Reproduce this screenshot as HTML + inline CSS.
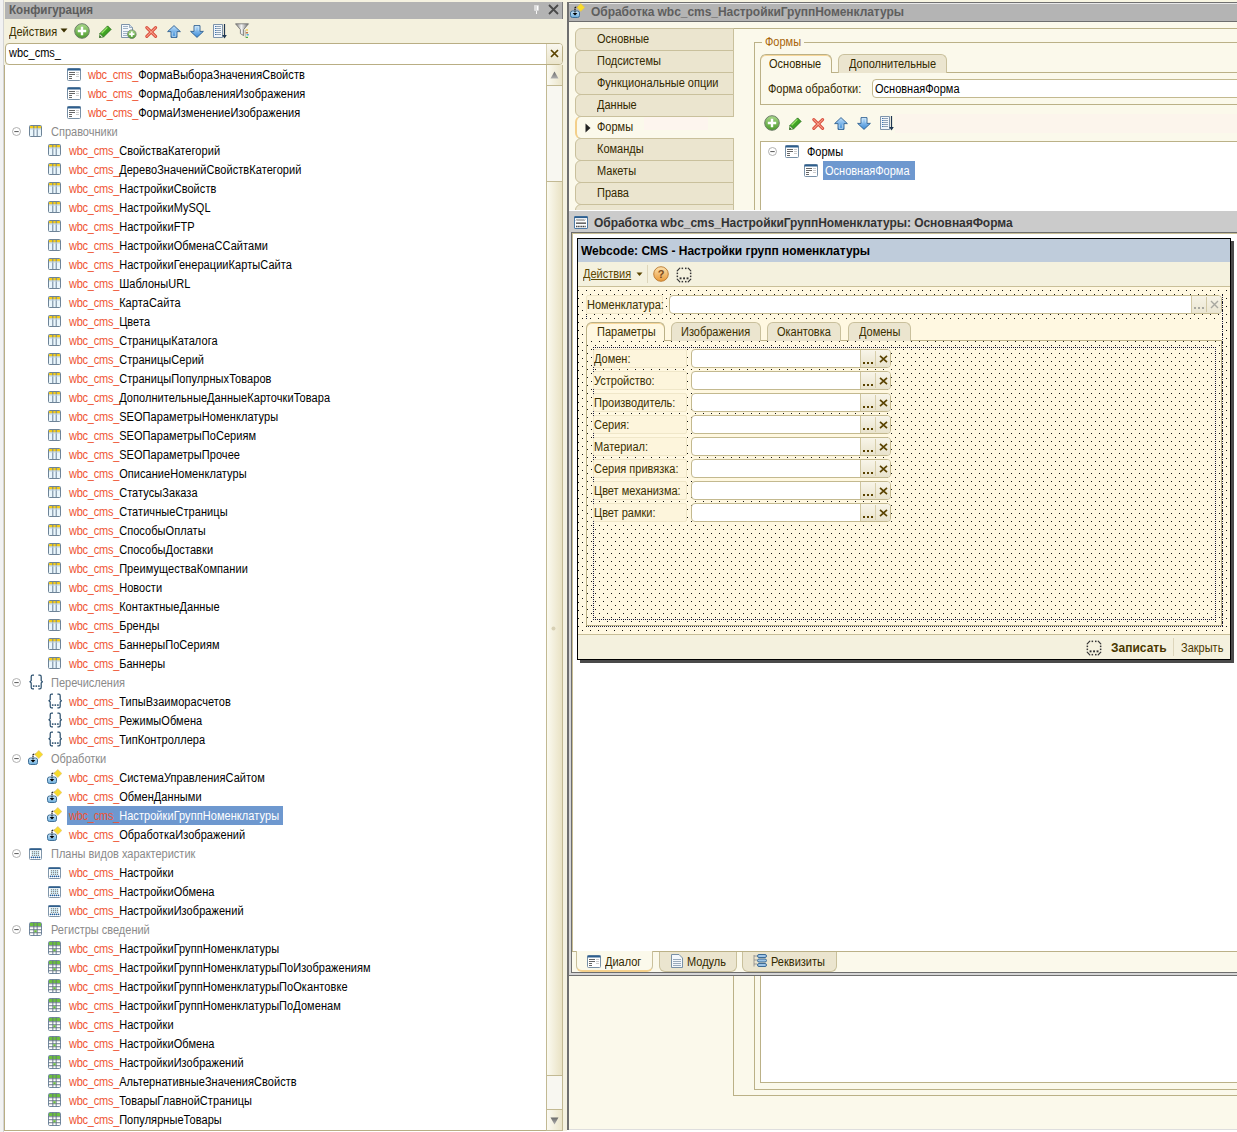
<!DOCTYPE html><html><head><meta charset="utf-8"><style>
html,body{margin:0;padding:0;width:1237px;height:1132px;overflow:hidden;background:#fff;font-family:"Liberation Sans",sans-serif;position:relative}
div{box-sizing:border-box}
svg{display:block;overflow:visible}

</style></head><body>
<svg width="0" height="0" style="position:absolute"><defs>
<linearGradient id="gBlue" x1="0" y1="0" x2="0" y2="1"><stop offset="0" stop-color="#cfe6f7"/><stop offset="1" stop-color="#6aaede"/></linearGradient>
<linearGradient id="gGreen" x1="0" y1="0" x2="0" y2="1"><stop offset="0" stop-color="#a9d98a"/><stop offset="1" stop-color="#4c9a2c"/></linearGradient>
<linearGradient id="gArrow" x1="0" y1="0" x2="0" y2="1"><stop offset="0" stop-color="#bfe0fb"/><stop offset="1" stop-color="#3a8ad6"/></linearGradient>
<linearGradient id="gOrange" x1="0" y1="0" x2="0" y2="1"><stop offset="0" stop-color="#fde3b0"/><stop offset="1" stop-color="#e99a3a"/></linearGradient>
<linearGradient id="gTri" x1="0" y1="0" x2="0" y2="1"><stop offset="0" stop-color="#6a6a6a"/><stop offset="1" stop-color="#b0b0b0"/></linearGradient>
<symbol id="form" viewBox="0 0 14 13">
 <rect x="0.5" y="0.5" width="13" height="12" rx="1" fill="#fff" stroke="#7890a6"/>
 <rect x="0.5" y="0.5" width="13" height="2" fill="#2d5e8e"/>
 <rect x="2" y="4" width="6" height="1" fill="#666"/><rect x="2" y="6" width="6" height="1" fill="#666"/>
 <rect x="2" y="8" width="3" height="1" fill="#666"/><rect x="2" y="10" width="3" height="1" fill="#666"/>
 <rect x="9" y="4" width="3" height="1" fill="#ccc"/><rect x="9" y="6" width="3" height="1" fill="#ccc"/><rect x="9" y="8" width="3" height="1" fill="#ccc"/>
</symbol>
<symbol id="cat" viewBox="0 0 13 12">
 <rect x="0.5" y="0.5" width="12" height="11" rx="1" fill="#eaf6fc" stroke="#6d8397"/>
 <rect x="1" y="1" width="11" height="2.5" fill="#f4cc1a"/>
 <rect x="4.3" y="0.5" width="1" height="11" fill="#6d8397"/><rect x="7.7" y="0.5" width="1" height="11" fill="#6d8397"/>
 <rect x="1" y="3.5" width="11" height="1" fill="#b9cde0"/>
</symbol>
<symbol id="enum" viewBox="0 0 14 16">
 <path d="M5 1.2H3.6Q2.2 1.2 2.2 2.8V6.6L1 7.8L2.2 9V13.2Q2.2 14.8 3.6 14.8H5M9.4 1.2H10.8Q12.2 1.2 12.2 2.8V6.6L13.4 7.8L12.2 9V13.2Q12.2 14.8 10.8 14.8H9.4" fill="none" stroke="#2e5270" stroke-width="1.25"/>
 <g fill="#2e5270"><rect x="3.9" y="11.3" width="1.6" height="1.6"/><rect x="6.5" y="11.3" width="1.6" height="1.6"/><rect x="9.1" y="11.3" width="1.6" height="1.6"/></g>
</symbol>
<symbol id="proc" viewBox="0 0 15 15">
 <rect x="0.5" y="8" width="9" height="6.5" rx="2" fill="url(#gBlue)" stroke="#3f6f96"/>
 <path d="M5 4.3V10" stroke="#000" stroke-width="1.1" stroke-dasharray="1.1 0.6"/>
 <path d="M5 4.3H8" stroke="#000" stroke-width="1.1" stroke-dasharray="1.1 0.6"/>
 <path d="M2.6 10H7.4L5 12.6Z" fill="#000"/>
 <path d="M10.8 0.5L14.8 4.5L10.8 8.5L6.8 4.5Z" fill="#f7dc2c" stroke="#dcb86a" stroke-width="0.6"/>
</symbol>
<symbol id="chart" viewBox="0 0 13 12">
 <rect x="0.5" y="0.5" width="12" height="11" rx="1" fill="#fff" stroke="#8096aa"/>
 <rect x="0.5" y="0.5" width="12" height="1.6" fill="#2d5e8e"/>
 <rect x="2.4" y="2.8" width="8.2" height="5.4" fill="#d6f2fb"/>
 <g fill="#8a8a8a"><circle cx="3.5" cy="3.7" r="0.65"/><circle cx="3.5" cy="5.5" r="0.65"/><circle cx="3.5" cy="7.4" r="0.65"/><circle cx="5.5" cy="3.7" r="0.65"/><circle cx="5.5" cy="5.5" r="0.65"/><circle cx="5.5" cy="7.4" r="0.65"/><circle cx="7.5" cy="3.7" r="0.65"/><circle cx="7.5" cy="5.5" r="0.65"/><circle cx="7.5" cy="7.4" r="0.65"/><circle cx="9.5" cy="3.7" r="0.65"/><circle cx="9.5" cy="5.5" r="0.65"/><circle cx="9.5" cy="7.4" r="0.65"/></g>
 <g fill="#1f5c99"><circle cx="2.5" cy="9.4" r="0.8"/><circle cx="4.5" cy="9.4" r="0.8"/><circle cx="6.5" cy="9.4" r="0.8"/><circle cx="8.5" cy="9.4" r="0.8"/><circle cx="10.5" cy="9.4" r="0.8"/></g>
</symbol>
<symbol id="reg" viewBox="0 0 13 14">
 <rect x="0.5" y="0.5" width="12" height="13" rx="1.2" fill="#fff" stroke="#7389a0"/>
 <rect x="1" y="1" width="11" height="3" fill="#6cbf3e"/>
 <g fill="#5f7080"><rect x="4.4" y="0.5" width="0.9" height="13"/><rect x="7.7" y="0.5" width="0.9" height="13"/>
 <rect x="0.5" y="4.3" width="12" height="0.9" fill="#5f7080"/><rect x="0.5" y="7.3" width="12" height="0.9"/><rect x="0.5" y="10.3" width="12" height="0.9"/></g>
 <rect x="5.3" y="8.2" width="2.4" height="2.1" fill="#6cbf3e"/>
</symbol>
<symbol id="minus" viewBox="0 0 9 9">
 <circle cx="4.5" cy="4.5" r="4" fill="#fff" stroke="#a8a8a8" stroke-width="0.9"/>
 <rect x="2.3" y="4" width="4.4" height="1.1" fill="#666"/>
</symbol>
<symbol id="plus" viewBox="0 0 16 16">
 <circle cx="8" cy="8" r="7.3" fill="url(#gGreen)" stroke="#6b7d68" stroke-width="1"/>
 <path d="M8 3.8V12.2M3.8 8H12.2" stroke="#fff" stroke-width="2.4"/>
</symbol>
<symbol id="pencil" viewBox="0 0 13 13">
 <path d="M0.9 8.6L8.6 0.9L12.1 4.4L4.4 12.1Z" fill="#3fa324" stroke="#1d6a10" stroke-width="0.8" stroke-linejoin="round"/>
 <path d="M2.6 8.2L8.4 2.4" stroke="#9be46a" stroke-width="1.3"/>
 <path d="M0.9 8.6L4.4 12.1L0.3 12.7Z" fill="#f2efdc" stroke="#1d6a10" stroke-width="0.6" stroke-linejoin="round"/>
 <path d="M0.3 12.7L0.9 10.6L2.4 12.1Z" fill="#1d5a10"/>
</symbol>
<symbol id="docplus" viewBox="0 0 16 15">
 <path d="M0.5 0.5H8.5L11.5 3.5V13.5H0.5Z" fill="#f4f8fc" stroke="#7d93aa"/>
 <path d="M8.5 0.5V3.5H11.5" fill="#cfdbe8" stroke="#7d93aa" stroke-width="0.7"/>
 <g fill="#9fb2c6" shape-rendering="crispEdges"><rect x="2" y="2" width="5" height="1"/><rect x="2" y="4" width="5" height="1"/><rect x="2" y="7" width="5" height="1"/><rect x="2" y="9" width="4" height="1"/><rect x="2" y="11" width="4" height="1"/></g>
 <circle cx="10.8" cy="10.2" r="4.3" fill="url(#gGreen)" stroke="#6b7d68" stroke-width="0.8"/>
 <path d="M10.8 7.6V12.8M8.2 10.2H13.4" stroke="#fff" stroke-width="1.8"/>
</symbol>
<symbol id="redx" viewBox="0 0 13 12">
 <path d="M1.8 1.6L10.6 10.4M10.6 1.6L1.8 10.4" stroke="#d94a3a" stroke-width="3" stroke-linecap="round"/>
 <path d="M1.8 1.6L10.6 10.4M10.6 1.6L1.8 10.4" stroke="#f7a08a" stroke-width="1.1" stroke-linecap="round"/>
</symbol>
<symbol id="up" viewBox="0 0 14 13">
 <path d="M7 0.6L13.4 6.6H10V12.4H4V6.6H0.6Z" fill="url(#gArrow)" stroke="#2f5f8e" stroke-width="0.9" stroke-linejoin="round"/>
 <path d="M5.2 7.4V11.4H8.8V7.4" fill="none" stroke="#d6ecfb" stroke-width="0.7"/>
</symbol>
<symbol id="down" viewBox="0 0 14 13">
 <path d="M7 12.4L13.4 6.4H10V0.6H4V6.4H0.6Z" fill="url(#gArrow)" stroke="#2f5f8e" stroke-width="0.9" stroke-linejoin="round"/>
 <path d="M5.2 5.6V1.6H8.8V5.6" fill="none" stroke="#d6ecfb" stroke-width="0.7"/>
</symbol>
<symbol id="list" viewBox="0 0 14 15">
 <path d="M0.5 0.5H9.5V13.5H0.5Z" fill="#f2f6fa" stroke="#7d93aa"/>
 <g fill="#8fa3b8" shape-rendering="crispEdges"><rect x="2" y="2" width="6" height="1"/><rect x="2" y="4" width="6" height="1"/><rect x="2" y="6" width="6" height="1"/><rect x="2" y="8" width="6" height="1"/><rect x="2" y="10" width="6" height="1"/></g>
 <g fill="#3f78b8" shape-rendering="crispEdges"><rect x="2" y="2" width="1" height="1"/><rect x="2" y="4" width="1" height="1"/><rect x="2" y="6" width="1" height="1"/><rect x="2" y="8" width="1" height="1"/><rect x="2" y="10" width="1" height="1"/></g>
 <path d="M11.5 0V12" stroke="#1e3550" stroke-width="1.2"/><path d="M9.2 11H13.8L11.5 14.5Z" fill="#1e3550"/>
</symbol>
<symbol id="filter" viewBox="0 0 16 16">
 <linearGradient id="gMetal" x1="0" y1="0" x2="1" y2="0"><stop offset="0" stop-color="#777"/><stop offset="0.45" stop-color="#f4f4f4"/><stop offset="1" stop-color="#6a6a6a"/></linearGradient>
 <path d="M0.5 0.8H13.5L8.6 6.6V12.6L5.4 10.6V6.6Z" fill="url(#gMetal)" stroke="#6d6d6d" stroke-width="0.8" stroke-linejoin="round"/>
 <path d="M10.3 7V14.5" stroke="#999" stroke-width="0.6"/>
 <rect x="10.8" y="6.4" width="2.2" height="1.2" fill="#f2c23a"/><rect x="10.8" y="9.2" width="2.2" height="1.2" fill="#b5592a"/><rect x="11.6" y="11.2" width="2.2" height="1.2" fill="#2aa0e0"/><rect x="10.8" y="13.8" width="2.2" height="1.2" fill="#4caa3c"/>
</symbol>
<symbol id="help" viewBox="0 0 16 16">
 <circle cx="8" cy="8" r="7.3" fill="url(#gOrange)" stroke="#b9772d" stroke-width="0.9"/>
 <text x="8" y="12.3" text-anchor="middle" font-family="Liberation Sans" font-weight="bold" font-size="11" fill="#7a4a1c">?</text>
</symbol>
<symbol id="dotsq" viewBox="0 0 16 16">
 <g stroke="#333" stroke-width="1.2" stroke-linecap="round"><path d="M1.2 3.8L3.8 1.2M12.2 1.2L14.8 3.8M1.2 12.2L3.8 14.8M12.2 14.8L14.8 12.2"/></g>
 <g fill="#333"><rect x="5.6" y="0.6" width="1.5" height="1.5"/><rect x="9" y="0.6" width="1.5" height="1.5"/><rect x="5.6" y="13.9" width="1.5" height="1.5"/><rect x="9" y="13.9" width="1.5" height="1.5"/>
 <rect x="0.6" y="5.6" width="1.5" height="1.5"/><rect x="0.6" y="8.6" width="1.5" height="1.5"/><rect x="13.9" y="5.6" width="1.5" height="1.5"/><rect x="13.9" y="8.6" width="1.5" height="1.5"/>
 <rect x="3.6" y="10.4" width="1.9" height="1.9"/><rect x="7.1" y="10.4" width="1.9" height="1.9"/><rect x="10.6" y="10.4" width="1.9" height="1.9"/></g>
</symbol>
<symbol id="formtitle" viewBox="0 0 14 13">
 <rect x="0.5" y="0.5" width="13" height="12" rx="0.5" fill="#fff" stroke="#4e7aa5"/>
 <rect x="0.5" y="0.5" width="13" height="1.6" fill="#2d5e8e"/>
 <path d="M2 4.5l1-1 1 1 1-1 1 1 1-1 1 1 1-1 1 1 1-1" stroke="#333" stroke-width="0.8" fill="none"/>
 <rect x="2" y="6.5" width="10" height="1.3" fill="#444"/>
 <path d="M2 10.5h10" stroke="#444" stroke-width="1.3" stroke-dasharray="1.2 0.5"/>
</symbol>
<symbol id="module" viewBox="0 0 12 14">
 <path d="M0.5 0.5H8L11.5 4V13.5H0.5Z" fill="#f4f8fc" stroke="#7890a6"/>
 <g fill="#9ab"><rect x="2" y="5" width="8" height="1"/><rect x="2" y="7" width="8" height="1"/><rect x="2" y="9" width="8" height="1"/><rect x="2" y="11" width="8" height="1"/></g>
</symbol>
<symbol id="attrs" viewBox="0 0 14 14">
 <path d="M1 1V12.5M1 2H4M1 6H4M1 10H4" stroke="#888" stroke-width="0.8" fill="none"/>
 <rect x="4.5" y="0.5" width="9" height="3" rx="1.5" fill="#9cc3e6" stroke="#3d6b95"/>
 <rect x="4.5" y="5" width="9" height="3" rx="1.5" fill="#9cc3e6" stroke="#3d6b95"/>
 <rect x="4.5" y="9.5" width="9" height="3" rx="1.5" fill="#9cc3e6" stroke="#3d6b95"/>
</symbol>
</defs></svg>
<div style="position:absolute;left:0px;top:0px;width:3px;height:1132px;background:#f2f2f2"></div>
<div style="position:absolute;left:3px;top:0px;width:1px;height:1132px;background:#d4d4d4"></div>
<div style="position:absolute;left:4px;top:0px;width:563px;height:2px;background:#f5f2e1"></div>
<div style="position:absolute;left:4px;top:2px;width:1px;height:41px;background:#f0ecd8"></div>
<div style="position:absolute;left:5px;top:2px;width:558px;height:17px;background:#b3b3b3;border-right:1px solid #7a7a7a"></div>
<div style="position:absolute;left:9px;top:2.84px;line-height:14px;font-size:12px;font-weight:bold;color:#5c5c5c;white-space:nowrap;transform:scaleX(0.9650);transform-origin:0 0;">Конфигурация</div>
<svg style="position:absolute;left:533px;top:5px" width="7" height="10"><rect x="1.5" y="0.5" width="4" height="5" fill="#fff" stroke="#ddd" stroke-width="0.5"/><rect x="2.5" y="1" width="1" height="4" fill="#bbb"/><rect x="3" y="6" width="1" height="3" fill="#f4f4f4"/></svg>
<svg style="position:absolute;left:548px;top:4px" width="11" height="11"><path d="M1 1L10 10M10 1L1 10" stroke="#4a4a4a" stroke-width="1.8"/></svg>
<div style="position:absolute;left:4px;top:19px;width:559px;height:24px;background:#f4f1de"></div>
<div style="position:absolute;left:9px;top:24.84px;line-height:14px;font-size:12px;font-weight:normal;color:#3b3100;white-space:nowrap;transform:scaleX(0.9167);transform-origin:0 0;">Действия</div>
<svg style="position:absolute;left:60px;top:28px" width="8" height="5"><path d="M0.5 0.5H7.5L4 4.5Z" fill="#3b3100"/></svg>
<svg style="position:absolute;left:74px;top:23px" width="16" height="16" viewBox="0 0 16 16"><use href="#plus"/></svg>
<svg style="position:absolute;left:99px;top:25px" width="13" height="13" viewBox="0 0 13 13"><use href="#pencil"/></svg>
<svg style="position:absolute;left:121px;top:24px" width="16" height="15" viewBox="0 0 16 15"><use href="#docplus"/></svg>
<svg style="position:absolute;left:145px;top:26px" width="13" height="12" viewBox="0 0 13 12"><use href="#redx"/></svg>
<svg style="position:absolute;left:167px;top:25px" width="14" height="13" viewBox="0 0 14 13"><use href="#up"/></svg>
<svg style="position:absolute;left:190px;top:25px" width="14" height="13" viewBox="0 0 14 13"><use href="#down"/></svg>
<svg style="position:absolute;left:213px;top:24px" width="14" height="15" viewBox="0 0 14 15"><use href="#list"/></svg>
<svg style="position:absolute;left:235px;top:23px" width="16" height="16" viewBox="0 0 16 16"><use href="#filter"/></svg>
<div style="position:absolute;left:4px;top:43px;width:559px;height:22px;background:#f4f1de"></div>
<div style="position:absolute;left:5px;top:43px;width:558px;height:22px;background:#fff;border:1px solid #b9ae84;border-radius:4px"></div>
<div style="position:absolute;left:9px;top:45.84px;line-height:14px;font-size:12px;font-weight:normal;color:#000;white-space:nowrap;transform:scaleX(0.9167);transform-origin:0 0;">wbc_cms_</div>
<div style="position:absolute;left:546px;top:44px;width:16px;height:20px;background:linear-gradient(#f9f7ee,#ebe5cc);border-left:1px solid #d9d2b4;border-radius:0 3px 3px 0"></div>
<svg style="position:absolute;left:550px;top:49px" width="9" height="9"><path d="M1 1L8 8M8 1L1 8" stroke="#5a4300" stroke-width="1.7"/></svg>
<div style="position:absolute;left:4px;top:65px;width:559px;height:1066px;background:#fff;border-left:1px solid #b9ae84;border-bottom:1px solid #b9ae84"></div>
<div style="position:absolute;left:546px;top:65px;width:17px;height:1066px;background:#f8f7f1;border-left:1px solid #c2b993;border-right:1px solid #c2b993"></div>
<div style="position:absolute;left:546px;top:65px;width:17px;height:21px;background:linear-gradient(90deg,#fbfaf2,#ebe5ca);border:1px solid #c2b993;border-top:none"></div>
<svg style="position:absolute;left:550px;top:71px" width="9" height="8"><path d="M4.5 0.5L8.5 7.5H0.5Z" fill="url(#gTri)"/></svg>
<div style="position:absolute;left:546px;top:181px;width:17px;height:895px;background:linear-gradient(90deg,#fbfaf0,#e9e2c4);border:1px solid #c2b993"></div>
<svg style="position:absolute;left:551px;top:626px" width="5" height="5"><circle cx="2.5" cy="2.5" r="2" fill="#d7d0b4"/></svg>
<div style="position:absolute;left:546px;top:1109px;width:17px;height:22px;background:linear-gradient(90deg,#fbfaf2,#ebe5ca);border:1px solid #c2b993"></div>
<svg style="position:absolute;left:550px;top:1117px" width="9" height="8"><path d="M0.5 0.5H8.5L4.5 7.5Z" fill="url(#gTri)"/></svg>
<svg style="position:absolute;left:67px;top:68px" width="14" height="13" viewBox="0 0 14 13"><use href="#form"/></svg>
<div style="position:absolute;left:87.7px;top:67.84px;line-height:14px;font-size:12px;font-weight:normal;color:#000;white-space:nowrap;transform:scaleX(0.9167);transform-origin:0 0;"><span style="color:#ef5533;letter-spacing:-0.25px">wbc_cms_</span><span style="letter-spacing:0.07px">ФормаВыбораЗначенияСвойств</span></div>
<svg style="position:absolute;left:67px;top:87px" width="14" height="13" viewBox="0 0 14 13"><use href="#form"/></svg>
<div style="position:absolute;left:87.7px;top:86.84px;line-height:14px;font-size:12px;font-weight:normal;color:#000;white-space:nowrap;transform:scaleX(0.9167);transform-origin:0 0;"><span style="color:#ef5533;letter-spacing:-0.25px">wbc_cms_</span><span style="letter-spacing:0.07px">ФормаДобавленияИзображения</span></div>
<svg style="position:absolute;left:67px;top:106px" width="14" height="13" viewBox="0 0 14 13"><use href="#form"/></svg>
<div style="position:absolute;left:87.7px;top:105.84px;line-height:14px;font-size:12px;font-weight:normal;color:#000;white-space:nowrap;transform:scaleX(0.9167);transform-origin:0 0;"><span style="color:#ef5533;letter-spacing:-0.25px">wbc_cms_</span><span style="letter-spacing:0.07px">ФормаИзменениеИзображения</span></div>
<svg style="position:absolute;left:12px;top:126.5px" width="9" height="9" viewBox="0 0 9 9"><use href="#minus"/></svg>
<svg style="position:absolute;left:29px;top:125px" width="13" height="12" viewBox="0 0 13 12"><use href="#cat"/></svg>
<div style="position:absolute;left:50.9px;top:124.84px;line-height:14px;font-size:12px;font-weight:normal;color:#8a8a8a;white-space:nowrap;transform:scaleX(0.9167);transform-origin:0 0;">Справочники</div>
<svg style="position:absolute;left:48px;top:144px" width="13" height="12" viewBox="0 0 13 12"><use href="#cat"/></svg>
<div style="position:absolute;left:68.8px;top:143.84px;line-height:14px;font-size:12px;font-weight:normal;color:#000;white-space:nowrap;transform:scaleX(0.9167);transform-origin:0 0;"><span style="color:#ef5533;letter-spacing:-0.25px">wbc_cms_</span><span style="letter-spacing:0.07px">СвойстваКатегорий</span></div>
<svg style="position:absolute;left:48px;top:163px" width="13" height="12" viewBox="0 0 13 12"><use href="#cat"/></svg>
<div style="position:absolute;left:68.8px;top:162.84px;line-height:14px;font-size:12px;font-weight:normal;color:#000;white-space:nowrap;transform:scaleX(0.9167);transform-origin:0 0;"><span style="color:#ef5533;letter-spacing:-0.25px">wbc_cms_</span><span style="letter-spacing:0.07px">ДеревоЗначенийСвойствКатегорий</span></div>
<svg style="position:absolute;left:48px;top:182px" width="13" height="12" viewBox="0 0 13 12"><use href="#cat"/></svg>
<div style="position:absolute;left:68.8px;top:181.84px;line-height:14px;font-size:12px;font-weight:normal;color:#000;white-space:nowrap;transform:scaleX(0.9167);transform-origin:0 0;"><span style="color:#ef5533;letter-spacing:-0.25px">wbc_cms_</span><span style="letter-spacing:0.07px">НастройкиСвойств</span></div>
<svg style="position:absolute;left:48px;top:201px" width="13" height="12" viewBox="0 0 13 12"><use href="#cat"/></svg>
<div style="position:absolute;left:68.8px;top:200.84px;line-height:14px;font-size:12px;font-weight:normal;color:#000;white-space:nowrap;transform:scaleX(0.9167);transform-origin:0 0;"><span style="color:#ef5533;letter-spacing:-0.25px">wbc_cms_</span><span style="letter-spacing:0.07px">НастройкиMySQL</span></div>
<svg style="position:absolute;left:48px;top:220px" width="13" height="12" viewBox="0 0 13 12"><use href="#cat"/></svg>
<div style="position:absolute;left:68.8px;top:219.84px;line-height:14px;font-size:12px;font-weight:normal;color:#000;white-space:nowrap;transform:scaleX(0.9167);transform-origin:0 0;"><span style="color:#ef5533;letter-spacing:-0.25px">wbc_cms_</span><span style="letter-spacing:0.07px">НастройкиFTP</span></div>
<svg style="position:absolute;left:48px;top:239px" width="13" height="12" viewBox="0 0 13 12"><use href="#cat"/></svg>
<div style="position:absolute;left:68.8px;top:238.84px;line-height:14px;font-size:12px;font-weight:normal;color:#000;white-space:nowrap;transform:scaleX(0.9167);transform-origin:0 0;"><span style="color:#ef5533;letter-spacing:-0.25px">wbc_cms_</span><span style="letter-spacing:0.07px">НастройкиОбменаССайтами</span></div>
<svg style="position:absolute;left:48px;top:258px" width="13" height="12" viewBox="0 0 13 12"><use href="#cat"/></svg>
<div style="position:absolute;left:68.8px;top:257.84px;line-height:14px;font-size:12px;font-weight:normal;color:#000;white-space:nowrap;transform:scaleX(0.9167);transform-origin:0 0;"><span style="color:#ef5533;letter-spacing:-0.25px">wbc_cms_</span><span style="letter-spacing:0.07px">НастройкиГенерацииКартыСайта</span></div>
<svg style="position:absolute;left:48px;top:277px" width="13" height="12" viewBox="0 0 13 12"><use href="#cat"/></svg>
<div style="position:absolute;left:68.8px;top:276.84px;line-height:14px;font-size:12px;font-weight:normal;color:#000;white-space:nowrap;transform:scaleX(0.9167);transform-origin:0 0;"><span style="color:#ef5533;letter-spacing:-0.25px">wbc_cms_</span><span style="letter-spacing:0.07px">ШаблоныURL</span></div>
<svg style="position:absolute;left:48px;top:296px" width="13" height="12" viewBox="0 0 13 12"><use href="#cat"/></svg>
<div style="position:absolute;left:68.8px;top:295.84px;line-height:14px;font-size:12px;font-weight:normal;color:#000;white-space:nowrap;transform:scaleX(0.9167);transform-origin:0 0;"><span style="color:#ef5533;letter-spacing:-0.25px">wbc_cms_</span><span style="letter-spacing:0.07px">КартаСайта</span></div>
<svg style="position:absolute;left:48px;top:315px" width="13" height="12" viewBox="0 0 13 12"><use href="#cat"/></svg>
<div style="position:absolute;left:68.8px;top:314.84px;line-height:14px;font-size:12px;font-weight:normal;color:#000;white-space:nowrap;transform:scaleX(0.9167);transform-origin:0 0;"><span style="color:#ef5533;letter-spacing:-0.25px">wbc_cms_</span><span style="letter-spacing:0.07px">Цвета</span></div>
<svg style="position:absolute;left:48px;top:334px" width="13" height="12" viewBox="0 0 13 12"><use href="#cat"/></svg>
<div style="position:absolute;left:68.8px;top:333.84px;line-height:14px;font-size:12px;font-weight:normal;color:#000;white-space:nowrap;transform:scaleX(0.9167);transform-origin:0 0;"><span style="color:#ef5533;letter-spacing:-0.25px">wbc_cms_</span><span style="letter-spacing:0.07px">СтраницыКаталога</span></div>
<svg style="position:absolute;left:48px;top:353px" width="13" height="12" viewBox="0 0 13 12"><use href="#cat"/></svg>
<div style="position:absolute;left:68.8px;top:352.84px;line-height:14px;font-size:12px;font-weight:normal;color:#000;white-space:nowrap;transform:scaleX(0.9167);transform-origin:0 0;"><span style="color:#ef5533;letter-spacing:-0.25px">wbc_cms_</span><span style="letter-spacing:0.07px">СтраницыСерий</span></div>
<svg style="position:absolute;left:48px;top:372px" width="13" height="12" viewBox="0 0 13 12"><use href="#cat"/></svg>
<div style="position:absolute;left:68.8px;top:371.84px;line-height:14px;font-size:12px;font-weight:normal;color:#000;white-space:nowrap;transform:scaleX(0.9167);transform-origin:0 0;"><span style="color:#ef5533;letter-spacing:-0.25px">wbc_cms_</span><span style="letter-spacing:0.07px">СтраницыПопулрныхТоваров</span></div>
<svg style="position:absolute;left:48px;top:391px" width="13" height="12" viewBox="0 0 13 12"><use href="#cat"/></svg>
<div style="position:absolute;left:68.8px;top:390.84px;line-height:14px;font-size:12px;font-weight:normal;color:#000;white-space:nowrap;transform:scaleX(0.9167);transform-origin:0 0;"><span style="color:#ef5533;letter-spacing:-0.25px">wbc_cms_</span><span style="letter-spacing:0.07px">ДополнительныеДанныеКарточкиТовара</span></div>
<svg style="position:absolute;left:48px;top:410px" width="13" height="12" viewBox="0 0 13 12"><use href="#cat"/></svg>
<div style="position:absolute;left:68.8px;top:409.84px;line-height:14px;font-size:12px;font-weight:normal;color:#000;white-space:nowrap;transform:scaleX(0.9167);transform-origin:0 0;"><span style="color:#ef5533;letter-spacing:-0.25px">wbc_cms_</span><span style="letter-spacing:0.07px">SEOПараметрыНоменклатуры</span></div>
<svg style="position:absolute;left:48px;top:429px" width="13" height="12" viewBox="0 0 13 12"><use href="#cat"/></svg>
<div style="position:absolute;left:68.8px;top:428.84px;line-height:14px;font-size:12px;font-weight:normal;color:#000;white-space:nowrap;transform:scaleX(0.9167);transform-origin:0 0;"><span style="color:#ef5533;letter-spacing:-0.25px">wbc_cms_</span><span style="letter-spacing:0.07px">SEOПараметрыПоСериям</span></div>
<svg style="position:absolute;left:48px;top:448px" width="13" height="12" viewBox="0 0 13 12"><use href="#cat"/></svg>
<div style="position:absolute;left:68.8px;top:447.84px;line-height:14px;font-size:12px;font-weight:normal;color:#000;white-space:nowrap;transform:scaleX(0.9167);transform-origin:0 0;"><span style="color:#ef5533;letter-spacing:-0.25px">wbc_cms_</span><span style="letter-spacing:0.07px">SEOПараметрыПрочее</span></div>
<svg style="position:absolute;left:48px;top:467px" width="13" height="12" viewBox="0 0 13 12"><use href="#cat"/></svg>
<div style="position:absolute;left:68.8px;top:466.84px;line-height:14px;font-size:12px;font-weight:normal;color:#000;white-space:nowrap;transform:scaleX(0.9167);transform-origin:0 0;"><span style="color:#ef5533;letter-spacing:-0.25px">wbc_cms_</span><span style="letter-spacing:0.07px">ОписаниеНоменклатуры</span></div>
<svg style="position:absolute;left:48px;top:486px" width="13" height="12" viewBox="0 0 13 12"><use href="#cat"/></svg>
<div style="position:absolute;left:68.8px;top:485.84px;line-height:14px;font-size:12px;font-weight:normal;color:#000;white-space:nowrap;transform:scaleX(0.9167);transform-origin:0 0;"><span style="color:#ef5533;letter-spacing:-0.25px">wbc_cms_</span><span style="letter-spacing:0.07px">СтатусыЗаказа</span></div>
<svg style="position:absolute;left:48px;top:505px" width="13" height="12" viewBox="0 0 13 12"><use href="#cat"/></svg>
<div style="position:absolute;left:68.8px;top:504.84px;line-height:14px;font-size:12px;font-weight:normal;color:#000;white-space:nowrap;transform:scaleX(0.9167);transform-origin:0 0;"><span style="color:#ef5533;letter-spacing:-0.25px">wbc_cms_</span><span style="letter-spacing:0.07px">СтатичныеСтраницы</span></div>
<svg style="position:absolute;left:48px;top:524px" width="13" height="12" viewBox="0 0 13 12"><use href="#cat"/></svg>
<div style="position:absolute;left:68.8px;top:523.84px;line-height:14px;font-size:12px;font-weight:normal;color:#000;white-space:nowrap;transform:scaleX(0.9167);transform-origin:0 0;"><span style="color:#ef5533;letter-spacing:-0.25px">wbc_cms_</span><span style="letter-spacing:0.07px">СпособыОплаты</span></div>
<svg style="position:absolute;left:48px;top:543px" width="13" height="12" viewBox="0 0 13 12"><use href="#cat"/></svg>
<div style="position:absolute;left:68.8px;top:542.84px;line-height:14px;font-size:12px;font-weight:normal;color:#000;white-space:nowrap;transform:scaleX(0.9167);transform-origin:0 0;"><span style="color:#ef5533;letter-spacing:-0.25px">wbc_cms_</span><span style="letter-spacing:0.07px">СпособыДоставки</span></div>
<svg style="position:absolute;left:48px;top:562px" width="13" height="12" viewBox="0 0 13 12"><use href="#cat"/></svg>
<div style="position:absolute;left:68.8px;top:561.84px;line-height:14px;font-size:12px;font-weight:normal;color:#000;white-space:nowrap;transform:scaleX(0.9167);transform-origin:0 0;"><span style="color:#ef5533;letter-spacing:-0.25px">wbc_cms_</span><span style="letter-spacing:0.07px">ПреимуществаКомпании</span></div>
<svg style="position:absolute;left:48px;top:581px" width="13" height="12" viewBox="0 0 13 12"><use href="#cat"/></svg>
<div style="position:absolute;left:68.8px;top:580.84px;line-height:14px;font-size:12px;font-weight:normal;color:#000;white-space:nowrap;transform:scaleX(0.9167);transform-origin:0 0;"><span style="color:#ef5533;letter-spacing:-0.25px">wbc_cms_</span><span style="letter-spacing:0.07px">Новости</span></div>
<svg style="position:absolute;left:48px;top:600px" width="13" height="12" viewBox="0 0 13 12"><use href="#cat"/></svg>
<div style="position:absolute;left:68.8px;top:599.84px;line-height:14px;font-size:12px;font-weight:normal;color:#000;white-space:nowrap;transform:scaleX(0.9167);transform-origin:0 0;"><span style="color:#ef5533;letter-spacing:-0.25px">wbc_cms_</span><span style="letter-spacing:0.07px">КонтактныеДанные</span></div>
<svg style="position:absolute;left:48px;top:619px" width="13" height="12" viewBox="0 0 13 12"><use href="#cat"/></svg>
<div style="position:absolute;left:68.8px;top:618.84px;line-height:14px;font-size:12px;font-weight:normal;color:#000;white-space:nowrap;transform:scaleX(0.9167);transform-origin:0 0;"><span style="color:#ef5533;letter-spacing:-0.25px">wbc_cms_</span><span style="letter-spacing:0.07px">Бренды</span></div>
<svg style="position:absolute;left:48px;top:638px" width="13" height="12" viewBox="0 0 13 12"><use href="#cat"/></svg>
<div style="position:absolute;left:68.8px;top:637.84px;line-height:14px;font-size:12px;font-weight:normal;color:#000;white-space:nowrap;transform:scaleX(0.9167);transform-origin:0 0;"><span style="color:#ef5533;letter-spacing:-0.25px">wbc_cms_</span><span style="letter-spacing:0.07px">БаннерыПоСериям</span></div>
<svg style="position:absolute;left:48px;top:657px" width="13" height="12" viewBox="0 0 13 12"><use href="#cat"/></svg>
<div style="position:absolute;left:68.8px;top:656.84px;line-height:14px;font-size:12px;font-weight:normal;color:#000;white-space:nowrap;transform:scaleX(0.9167);transform-origin:0 0;"><span style="color:#ef5533;letter-spacing:-0.25px">wbc_cms_</span><span style="letter-spacing:0.07px">Баннеры</span></div>
<svg style="position:absolute;left:12px;top:677.5px" width="9" height="9" viewBox="0 0 9 9"><use href="#minus"/></svg>
<svg style="position:absolute;left:29px;top:674px" width="14" height="16" viewBox="0 0 14 16"><use href="#enum"/></svg>
<div style="position:absolute;left:50.9px;top:675.84px;line-height:14px;font-size:12px;font-weight:normal;color:#8a8a8a;white-space:nowrap;transform:scaleX(0.9167);transform-origin:0 0;">Перечисления</div>
<svg style="position:absolute;left:48px;top:693px" width="14" height="16" viewBox="0 0 14 16"><use href="#enum"/></svg>
<div style="position:absolute;left:68.8px;top:694.84px;line-height:14px;font-size:12px;font-weight:normal;color:#000;white-space:nowrap;transform:scaleX(0.9167);transform-origin:0 0;"><span style="color:#ef5533;letter-spacing:-0.25px">wbc_cms_</span><span style="letter-spacing:0.07px">ТипыВзаиморасчетов</span></div>
<svg style="position:absolute;left:48px;top:712px" width="14" height="16" viewBox="0 0 14 16"><use href="#enum"/></svg>
<div style="position:absolute;left:68.8px;top:713.84px;line-height:14px;font-size:12px;font-weight:normal;color:#000;white-space:nowrap;transform:scaleX(0.9167);transform-origin:0 0;"><span style="color:#ef5533;letter-spacing:-0.25px">wbc_cms_</span><span style="letter-spacing:0.07px">РежимыОбмена</span></div>
<svg style="position:absolute;left:48px;top:731px" width="14" height="16" viewBox="0 0 14 16"><use href="#enum"/></svg>
<div style="position:absolute;left:68.8px;top:732.84px;line-height:14px;font-size:12px;font-weight:normal;color:#000;white-space:nowrap;transform:scaleX(0.9167);transform-origin:0 0;"><span style="color:#ef5533;letter-spacing:-0.25px">wbc_cms_</span><span style="letter-spacing:0.07px">ТипКонтроллера</span></div>
<svg style="position:absolute;left:12px;top:753.5px" width="9" height="9" viewBox="0 0 9 9"><use href="#minus"/></svg>
<svg style="position:absolute;left:28px;top:750px" width="15" height="15" viewBox="0 0 15 15"><use href="#proc"/></svg>
<div style="position:absolute;left:50.9px;top:751.84px;line-height:14px;font-size:12px;font-weight:normal;color:#8a8a8a;white-space:nowrap;transform:scaleX(0.9167);transform-origin:0 0;">Обработки</div>
<svg style="position:absolute;left:47px;top:769px" width="15" height="15" viewBox="0 0 15 15"><use href="#proc"/></svg>
<div style="position:absolute;left:68.8px;top:770.84px;line-height:14px;font-size:12px;font-weight:normal;color:#000;white-space:nowrap;transform:scaleX(0.9167);transform-origin:0 0;"><span style="color:#ef5533;letter-spacing:-0.25px">wbc_cms_</span><span style="letter-spacing:0.07px">СистемаУправленияСайтом</span></div>
<svg style="position:absolute;left:47px;top:788px" width="15" height="15" viewBox="0 0 15 15"><use href="#proc"/></svg>
<div style="position:absolute;left:68.8px;top:789.84px;line-height:14px;font-size:12px;font-weight:normal;color:#000;white-space:nowrap;transform:scaleX(0.9167);transform-origin:0 0;"><span style="color:#ef5533;letter-spacing:-0.25px">wbc_cms_</span><span style="letter-spacing:0.07px">ОбменДанными</span></div>
<svg style="position:absolute;left:47px;top:807px" width="15" height="15" viewBox="0 0 15 15"><use href="#proc"/></svg>
<div style="position:absolute;left:67px;top:806px;width:216px;height:19px;background:#6e98cf"></div>
<div style="position:absolute;left:68.8px;top:808.84px;line-height:14px;font-size:12px;font-weight:normal;color:#fff;white-space:nowrap;transform:scaleX(0.9167);transform-origin:0 0;"><span style="color:#ef5533;letter-spacing:-0.25px">wbc_cms_</span><span style="letter-spacing:0.07px">НастройкиГруппНоменклатуры</span></div>
<svg style="position:absolute;left:47px;top:826px" width="15" height="15" viewBox="0 0 15 15"><use href="#proc"/></svg>
<div style="position:absolute;left:68.8px;top:827.84px;line-height:14px;font-size:12px;font-weight:normal;color:#000;white-space:nowrap;transform:scaleX(0.9167);transform-origin:0 0;"><span style="color:#ef5533;letter-spacing:-0.25px">wbc_cms_</span><span style="letter-spacing:0.07px">ОбработкаИзображений</span></div>
<svg style="position:absolute;left:12px;top:848.5px" width="9" height="9" viewBox="0 0 9 9"><use href="#minus"/></svg>
<svg style="position:absolute;left:29px;top:848px" width="13" height="12" viewBox="0 0 13 12"><use href="#chart"/></svg>
<div style="position:absolute;left:50.9px;top:846.84px;line-height:14px;font-size:12px;font-weight:normal;color:#8a8a8a;white-space:nowrap;transform:scaleX(0.9167);transform-origin:0 0;">Планы видов характеристик</div>
<svg style="position:absolute;left:48px;top:867px" width="13" height="12" viewBox="0 0 13 12"><use href="#chart"/></svg>
<div style="position:absolute;left:68.8px;top:865.84px;line-height:14px;font-size:12px;font-weight:normal;color:#000;white-space:nowrap;transform:scaleX(0.9167);transform-origin:0 0;"><span style="color:#ef5533;letter-spacing:-0.25px">wbc_cms_</span><span style="letter-spacing:0.07px">Настройки</span></div>
<svg style="position:absolute;left:48px;top:886px" width="13" height="12" viewBox="0 0 13 12"><use href="#chart"/></svg>
<div style="position:absolute;left:68.8px;top:884.84px;line-height:14px;font-size:12px;font-weight:normal;color:#000;white-space:nowrap;transform:scaleX(0.9167);transform-origin:0 0;"><span style="color:#ef5533;letter-spacing:-0.25px">wbc_cms_</span><span style="letter-spacing:0.07px">НастройкиОбмена</span></div>
<svg style="position:absolute;left:48px;top:905px" width="13" height="12" viewBox="0 0 13 12"><use href="#chart"/></svg>
<div style="position:absolute;left:68.8px;top:903.84px;line-height:14px;font-size:12px;font-weight:normal;color:#000;white-space:nowrap;transform:scaleX(0.9167);transform-origin:0 0;"><span style="color:#ef5533;letter-spacing:-0.25px">wbc_cms_</span><span style="letter-spacing:0.07px">НастройкиИзображений</span></div>
<svg style="position:absolute;left:12px;top:924.5px" width="9" height="9" viewBox="0 0 9 9"><use href="#minus"/></svg>
<svg style="position:absolute;left:29px;top:922px" width="13" height="14" viewBox="0 0 13 14"><use href="#reg"/></svg>
<div style="position:absolute;left:50.9px;top:922.84px;line-height:14px;font-size:12px;font-weight:normal;color:#8a8a8a;white-space:nowrap;transform:scaleX(0.9167);transform-origin:0 0;">Регистры сведений</div>
<svg style="position:absolute;left:48px;top:941px" width="13" height="14" viewBox="0 0 13 14"><use href="#reg"/></svg>
<div style="position:absolute;left:68.8px;top:941.84px;line-height:14px;font-size:12px;font-weight:normal;color:#000;white-space:nowrap;transform:scaleX(0.9167);transform-origin:0 0;"><span style="color:#ef5533;letter-spacing:-0.25px">wbc_cms_</span><span style="letter-spacing:0.07px">НастройкиГруппНоменклатуры</span></div>
<svg style="position:absolute;left:48px;top:960px" width="13" height="14" viewBox="0 0 13 14"><use href="#reg"/></svg>
<div style="position:absolute;left:68.8px;top:960.84px;line-height:14px;font-size:12px;font-weight:normal;color:#000;white-space:nowrap;transform:scaleX(0.9167);transform-origin:0 0;"><span style="color:#ef5533;letter-spacing:-0.25px">wbc_cms_</span><span style="letter-spacing:0.07px">НастройкиГруппНоменклатурыПоИзображениям</span></div>
<svg style="position:absolute;left:48px;top:979px" width="13" height="14" viewBox="0 0 13 14"><use href="#reg"/></svg>
<div style="position:absolute;left:68.8px;top:979.84px;line-height:14px;font-size:12px;font-weight:normal;color:#000;white-space:nowrap;transform:scaleX(0.9167);transform-origin:0 0;"><span style="color:#ef5533;letter-spacing:-0.25px">wbc_cms_</span><span style="letter-spacing:0.07px">НастройкиГруппНоменклатурыПоОкантовке</span></div>
<svg style="position:absolute;left:48px;top:998px" width="13" height="14" viewBox="0 0 13 14"><use href="#reg"/></svg>
<div style="position:absolute;left:68.8px;top:998.84px;line-height:14px;font-size:12px;font-weight:normal;color:#000;white-space:nowrap;transform:scaleX(0.9167);transform-origin:0 0;"><span style="color:#ef5533;letter-spacing:-0.25px">wbc_cms_</span><span style="letter-spacing:0.07px">НастройкиГруппНоменклатурыПоДоменам</span></div>
<svg style="position:absolute;left:48px;top:1017px" width="13" height="14" viewBox="0 0 13 14"><use href="#reg"/></svg>
<div style="position:absolute;left:68.8px;top:1017.84px;line-height:14px;font-size:12px;font-weight:normal;color:#000;white-space:nowrap;transform:scaleX(0.9167);transform-origin:0 0;"><span style="color:#ef5533;letter-spacing:-0.25px">wbc_cms_</span><span style="letter-spacing:0.07px">Настройки</span></div>
<svg style="position:absolute;left:48px;top:1036px" width="13" height="14" viewBox="0 0 13 14"><use href="#reg"/></svg>
<div style="position:absolute;left:68.8px;top:1036.84px;line-height:14px;font-size:12px;font-weight:normal;color:#000;white-space:nowrap;transform:scaleX(0.9167);transform-origin:0 0;"><span style="color:#ef5533;letter-spacing:-0.25px">wbc_cms_</span><span style="letter-spacing:0.07px">НастройкиОбмена</span></div>
<svg style="position:absolute;left:48px;top:1055px" width="13" height="14" viewBox="0 0 13 14"><use href="#reg"/></svg>
<div style="position:absolute;left:68.8px;top:1055.84px;line-height:14px;font-size:12px;font-weight:normal;color:#000;white-space:nowrap;transform:scaleX(0.9167);transform-origin:0 0;"><span style="color:#ef5533;letter-spacing:-0.25px">wbc_cms_</span><span style="letter-spacing:0.07px">НастройкиИзображений</span></div>
<svg style="position:absolute;left:48px;top:1074px" width="13" height="14" viewBox="0 0 13 14"><use href="#reg"/></svg>
<div style="position:absolute;left:68.8px;top:1074.84px;line-height:14px;font-size:12px;font-weight:normal;color:#000;white-space:nowrap;transform:scaleX(0.9167);transform-origin:0 0;"><span style="color:#ef5533;letter-spacing:-0.25px">wbc_cms_</span><span style="letter-spacing:0.07px">АльтернативныеЗначенияСвойств</span></div>
<svg style="position:absolute;left:48px;top:1093px" width="13" height="14" viewBox="0 0 13 14"><use href="#reg"/></svg>
<div style="position:absolute;left:68.8px;top:1093.84px;line-height:14px;font-size:12px;font-weight:normal;color:#000;white-space:nowrap;transform:scaleX(0.9167);transform-origin:0 0;"><span style="color:#ef5533;letter-spacing:-0.25px">wbc_cms_</span><span style="letter-spacing:0.07px">ТоварыГлавнойСтраницы</span></div>
<svg style="position:absolute;left:48px;top:1112px" width="13" height="14" viewBox="0 0 13 14"><use href="#reg"/></svg>
<div style="position:absolute;left:68.8px;top:1112.84px;line-height:14px;font-size:12px;font-weight:normal;color:#000;white-space:nowrap;transform:scaleX(0.9167);transform-origin:0 0;"><span style="color:#ef5533;letter-spacing:-0.25px">wbc_cms_</span><span style="letter-spacing:0.07px">ПопулярныеТовары</span></div>
<div style="position:absolute;left:563px;top:0px;width:4px;height:1132px;background:#f5f2e1"></div>
<div style="position:absolute;left:563px;top:1131px;width:4px;height:1px;background:#fff"></div>
<div style="position:absolute;left:563px;top:0px;width:674px;height:2px;background:#f8f5e2"></div>
<div style="position:absolute;left:567px;top:2px;width:670px;height:1128px;background:#fbf9eb"></div>
<div style="position:absolute;left:567px;top:2px;width:2px;height:1129px;background:#6f6f6f"></div>
<div style="position:absolute;left:567px;top:2px;width:670px;height:1px;background:#707070"></div>
<div style="position:absolute;left:569px;top:3px;width:668px;height:1px;background:#e8e8e8"></div>
<div style="position:absolute;left:569px;top:4px;width:668px;height:17px;background:#b4b4b4"></div>
<div style="position:absolute;left:569px;top:21px;width:668px;height:1px;background:#6d6d6d"></div>
<svg style="position:absolute;left:570px;top:3px" width="15" height="15" viewBox="0 0 15 15"><use href="#proc"/></svg>
<div style="position:absolute;left:591px;top:5.34px;line-height:14px;font-size:12px;font-weight:bold;color:#5e5e5e;white-space:nowrap;letter-spacing:-0.05px">Обработка wbc_cms_НастройкиГруппНоменклатуры</div>
<div style="position:absolute;left:569px;top:1129px;width:668px;height:1px;background:#dedede"></div>
<div style="position:absolute;left:567px;top:1130px;width:670px;height:2px;background:#fff"></div>
<div style="position:absolute;left:733px;top:28px;width:520px;height:1068px;border:1px solid #bbb187;border-right:none"></div>
<div style="position:absolute;left:575px;top:28px;width:159px;height:23px;background:#ebe5cf;border:1px solid #c9c09c;border-radius:6px 0 0 6px"></div>
<div style="position:absolute;left:596.5px;top:32.44px;line-height:14px;font-size:12px;font-weight:normal;color:#332900;white-space:nowrap;transform:scaleX(0.9167);transform-origin:0 0;">Основные</div>
<div style="position:absolute;left:575px;top:50px;width:159px;height:23px;background:#ebe5cf;border:1px solid #c9c09c;border-radius:6px 0 0 6px"></div>
<div style="position:absolute;left:596.5px;top:54.44px;line-height:14px;font-size:12px;font-weight:normal;color:#332900;white-space:nowrap;transform:scaleX(0.9167);transform-origin:0 0;">Подсистемы</div>
<div style="position:absolute;left:575px;top:72px;width:159px;height:23px;background:#ebe5cf;border:1px solid #c9c09c;border-radius:6px 0 0 6px"></div>
<div style="position:absolute;left:596.5px;top:76.44px;line-height:14px;font-size:12px;font-weight:normal;color:#332900;white-space:nowrap;transform:scaleX(0.9167);transform-origin:0 0;">Функциональные опции</div>
<div style="position:absolute;left:575px;top:94px;width:159px;height:23px;background:#ebe5cf;border:1px solid #c9c09c;border-radius:6px 0 0 6px"></div>
<div style="position:absolute;left:596.5px;top:98.44px;line-height:14px;font-size:12px;font-weight:normal;color:#332900;white-space:nowrap;transform:scaleX(0.9167);transform-origin:0 0;">Данные</div>
<div style="position:absolute;left:575px;top:116px;width:159px;height:23px;background:#fbf9eb;border:1px solid #c9c09c;border-right:none;border-left:2px solid #f3cf8a;border-radius:6px 0 0 6px"></div>
<div style="position:absolute;left:644px;top:117px;width:64px;height:13px;background:#fdf5ee"></div>
<svg style="position:absolute;left:585px;top:123px" width="6" height="10"><path d="M0.5 0.5L5.5 5L0.5 9.5Z" fill="#222"/></svg>
<div style="position:absolute;left:596.5px;top:120.44px;line-height:14px;font-size:12px;font-weight:normal;color:#332900;white-space:nowrap;transform:scaleX(0.9167);transform-origin:0 0;">Формы</div>
<div style="position:absolute;left:575px;top:138px;width:159px;height:23px;background:#ebe5cf;border:1px solid #c9c09c;border-radius:6px 0 0 6px"></div>
<div style="position:absolute;left:596.5px;top:142.44px;line-height:14px;font-size:12px;font-weight:normal;color:#332900;white-space:nowrap;transform:scaleX(0.9167);transform-origin:0 0;">Команды</div>
<div style="position:absolute;left:575px;top:160px;width:159px;height:23px;background:#ebe5cf;border:1px solid #c9c09c;border-radius:6px 0 0 6px"></div>
<div style="position:absolute;left:596.5px;top:164.44px;line-height:14px;font-size:12px;font-weight:normal;color:#332900;white-space:nowrap;transform:scaleX(0.9167);transform-origin:0 0;">Макеты</div>
<div style="position:absolute;left:575px;top:182px;width:159px;height:23px;background:#ebe5cf;border:1px solid #c9c09c;border-radius:6px 0 0 6px"></div>
<div style="position:absolute;left:596.5px;top:186.44px;line-height:14px;font-size:12px;font-weight:normal;color:#332900;white-space:nowrap;transform:scaleX(0.9167);transform-origin:0 0;">Права</div>
<div style="position:absolute;left:575px;top:204px;width:159px;height:23px;background:#ebe5cf;border:1px solid #c9c09c;border-radius:6px 0 0 6px"></div>
<div style="position:absolute;left:754px;top:42px;width:500px;height:1048px;border:1px solid #bbb187;border-right:none"></div>
<div style="position:absolute;left:762px;top:36px;width:42px;height:12px;background:#fbf9eb"></div>
<div style="position:absolute;left:765px;top:35.34px;line-height:14px;font-size:12px;font-weight:normal;color:#a8650a;white-space:nowrap;transform:scaleX(0.9167);transform-origin:0 0;">Формы</div>
<div style="position:absolute;left:760px;top:72px;width:500px;height:33px;border:1px solid #bbb187;border-right:none;background:#fbf9eb"></div>
<div style="position:absolute;left:838px;top:54px;width:109px;height:19px;background:#ebe5cf;border:1px solid #c9c09c;border-bottom:none;border-radius:6px 6px 0 0"></div>
<div style="position:absolute;left:849px;top:56.64px;line-height:14px;font-size:12px;font-weight:normal;color:#332900;white-space:nowrap;transform:scaleX(0.9167);transform-origin:0 0;">Дополнительные</div>
<div style="position:absolute;left:760px;top:54px;width:72px;height:19px;background:#fbf9eb;border:1px solid #bbb187;border-bottom:none;box-shadow:inset 0 1px 0 #f7d699;border-radius:6px 6px 0 0"></div>
<div style="position:absolute;left:769px;top:56.64px;line-height:14px;font-size:12px;font-weight:normal;color:#332900;white-space:nowrap;transform:scaleX(0.9167);transform-origin:0 0;">Основные</div>
<div style="position:absolute;left:768px;top:81.54px;line-height:14px;font-size:12px;font-weight:normal;color:#332900;white-space:nowrap;transform:scaleX(0.9167);transform-origin:0 0;">Форма обработки:</div>
<div style="position:absolute;left:872px;top:79px;width:400px;height:19px;background:#fff;border:1px solid #c3b98f;border-radius:4px"></div>
<div style="position:absolute;left:875px;top:81.54px;line-height:14px;font-size:12px;font-weight:normal;color:#000;white-space:nowrap;transform:scaleX(0.9167);transform-origin:0 0;">ОсновнаяФорма</div>
<div style="position:absolute;left:895px;top:114px;width:342px;height:19px;background:#fcf5ec"></div>
<svg style="position:absolute;left:764px;top:115px" width="16" height="16" viewBox="0 0 16 16"><use href="#plus"/></svg>
<svg style="position:absolute;left:789px;top:117px" width="13" height="13" viewBox="0 0 13 13"><use href="#pencil"/></svg>
<svg style="position:absolute;left:812px;top:118px" width="13" height="12" viewBox="0 0 13 12"><use href="#redx"/></svg>
<svg style="position:absolute;left:834px;top:117px" width="14" height="13" viewBox="0 0 14 13"><use href="#up"/></svg>
<svg style="position:absolute;left:857px;top:117px" width="14" height="13" viewBox="0 0 14 13"><use href="#down"/></svg>
<svg style="position:absolute;left:880px;top:116px" width="14" height="15" viewBox="0 0 14 15"><use href="#list"/></svg>
<div style="position:absolute;left:760px;top:141px;width:500px;height:942px;background:#fff;border:1px solid #bbb187;border-right:none"></div>
<svg style="position:absolute;left:768px;top:147px" width="9" height="9" viewBox="0 0 9 9"><use href="#minus"/></svg>
<svg style="position:absolute;left:785px;top:145px" width="14" height="13" viewBox="0 0 14 13"><use href="#form"/></svg>
<div style="position:absolute;left:807px;top:144.84px;line-height:14px;font-size:12px;font-weight:normal;color:#000;white-space:nowrap;transform:scaleX(0.9167);transform-origin:0 0;">Формы</div>
<svg style="position:absolute;left:804px;top:164px" width="14" height="13" viewBox="0 0 14 13"><use href="#form"/></svg>
<div style="position:absolute;left:823px;top:161px;width:92px;height:19px;background:#6e98cf"></div>
<div style="position:absolute;left:825px;top:163.84px;line-height:14px;font-size:12px;font-weight:normal;color:#fff;white-space:nowrap;transform:scaleX(0.9167);transform-origin:0 0;">ОсновнаяФорма</div>
<div style="position:absolute;left:569px;top:210px;width:668px;height:1px;background:#fff"></div>
<div style="position:absolute;left:569px;top:211px;width:668px;height:765px;background:#d6d6d6"></div>
<div style="position:absolute;left:569px;top:211px;width:668px;height:21px;background:#cbcbcb"></div>
<svg style="position:absolute;left:574px;top:216px" width="14" height="13" viewBox="0 0 14 13"><use href="#formtitle"/></svg>
<div style="position:absolute;left:594px;top:215.54px;line-height:14px;font-size:12px;font-weight:bold;color:#333;white-space:nowrap;letter-spacing:-0.05px">Обработка wbc_cms_НастройкиГруппНоменклатуры: ОсновнаяФорма</div>
<div style="position:absolute;left:571px;top:232px;width:666px;height:1px;background:#6e6e6e"></div>
<div style="position:absolute;left:571px;top:232px;width:1px;height:741px;background:#6e6e6e"></div>
<div style="position:absolute;left:572px;top:233px;width:665px;height:1px;background:#c8be95"></div>
<div style="position:absolute;left:572px;top:234px;width:665px;height:717px;background:#fff"></div>
<div style="position:absolute;left:572px;top:233px;width:1px;height:718px;background:#c8be95"></div>
<div style="position:absolute;left:572px;top:951px;width:665px;height:21px;background:#fbf9eb;border-top:1px solid #bbb187"></div>
<div style="position:absolute;left:571px;top:972px;width:666px;height:1px;background:#6e6e6e"></div>
<div style="position:absolute;left:569px;top:975px;width:668px;height:1px;background:#6e6e6e"></div>
<div style="position:absolute;left:576px;top:951px;width:77px;height:21px;background:#fbf9eb;border:1px solid #c9c09c;border-top:none;border-bottom:2px solid #f5d18c;border-radius:0 0 6px 6px"></div>
<svg style="position:absolute;left:587px;top:955px" width="14" height="13" viewBox="0 0 14 13"><use href="#form"/></svg>
<div style="position:absolute;left:605px;top:954.84px;line-height:14px;font-size:12px;font-weight:normal;color:#332900;white-space:nowrap;transform:scaleX(0.9167);transform-origin:0 0;">Диалог</div>
<div style="position:absolute;left:659px;top:952px;width:78px;height:20px;background:#ebe5cf;border:1px solid #c9c09c;border-top:none;border-radius:0 0 6px 6px"></div>
<svg style="position:absolute;left:671px;top:954px" width="12" height="14" viewBox="0 0 12 14"><use href="#module"/></svg>
<div style="position:absolute;left:687px;top:954.84px;line-height:14px;font-size:12px;font-weight:normal;color:#332900;white-space:nowrap;transform:scaleX(0.9167);transform-origin:0 0;">Модуль</div>
<div style="position:absolute;left:742px;top:952px;width:95px;height:20px;background:#ebe5cf;border:1px solid #c9c09c;border-top:none;border-radius:0 0 6px 6px"></div>
<svg style="position:absolute;left:753px;top:954px" width="14" height="14" viewBox="0 0 14 14"><use href="#attrs"/></svg>
<div style="position:absolute;left:771px;top:954.84px;line-height:14px;font-size:12px;font-weight:normal;color:#332900;white-space:nowrap;transform:scaleX(0.9167);transform-origin:0 0;">Реквизиты</div>
<div style="position:absolute;left:580px;top:241px;width:654px;height:422px;background:#4a4a4a"></div>
<div style="position:absolute;left:577px;top:238px;width:654px;height:422px;background:#fff8e1;border:1px solid #000"></div>
<div style="position:absolute;left:578px;top:239px;width:652px;height:23px;background:#bfccdb"></div>
<div style="position:absolute;left:581px;top:244.34px;line-height:14px;font-size:12px;font-weight:bold;color:#000;white-space:nowrap;">Webcode: CMS - Настройки групп номенклатуры</div>
<div style="position:absolute;left:578px;top:262px;width:652px;height:25px;background:#f4f1de;border-bottom:1px solid #c9bf98"></div>
<div style="position:absolute;left:583px;top:266.84px;line-height:14px;font-size:12px;font-weight:normal;color:#5a4500;white-space:nowrap;transform:scaleX(0.9167);transform-origin:0 0;text-decoration:underline">Действия</div>
<svg style="position:absolute;left:636px;top:272px" width="7" height="5"><path d="M0.5 0.5H6.5L3.5 4Z" fill="#5a4500"/></svg>
<div style="position:absolute;left:647px;top:265px;width:1px;height:18px;background:#ddd6bb"></div>
<svg style="position:absolute;left:653px;top:266px" width="16" height="16" viewBox="0 0 16 16"><use href="#help"/></svg>
<svg style="position:absolute;left:676px;top:267px" width="16" height="16" viewBox="0 0 16 16"><use href="#dotsq"/></svg>
<div style="position:absolute;left:578px;top:634px;width:652px;height:25px;background:#f4f1de;border-top:1px solid #c9bf98"></div>
<svg style="position:absolute;left:1086px;top:640px" width="16" height="16" viewBox="0 0 16 16"><use href="#dotsq"/></svg>
<div style="position:absolute;left:1111px;top:640.84px;line-height:14px;font-size:12px;font-weight:bold;color:#4a3800;white-space:nowrap;">Записать</div>
<div style="position:absolute;left:1173px;top:638px;width:1px;height:18px;background:#ddd6bb"></div>
<div style="position:absolute;left:1181px;top:640.54px;line-height:14px;font-size:12px;font-weight:normal;color:#4a3800;white-space:nowrap;transform:scaleX(0.9167);transform-origin:0 0;">Закрыть</div>
<svg style="position:absolute;left:578px;top:287px" width="652" height="347" shape-rendering="crispEdges"><defs><pattern id="dotsA" x="0" y="0" width="8" height="8" patternUnits="userSpaceOnUse"><rect x="4" y="7" width="1" height="1" fill="#111"/><rect x="0" y="3" width="1" height="1" fill="#111"/></pattern></defs><rect width="652" height="347" fill="url(#dotsA)"/></svg>
<div style="position:absolute;left:586px;top:295px;width:77px;height:19px;background:#fdf5dc;border:1px solid #f0e7c9;border-radius:2px"></div>
<div style="position:absolute;left:586.7px;top:297.64px;line-height:14px;font-size:12px;font-weight:normal;color:#3b3000;white-space:nowrap;transform:scaleX(0.9167);transform-origin:0 0;">Номенклатура:</div>
<div style="position:absolute;left:669px;top:295px;width:553px;height:19px;background:#fff;border:1px solid #c3b98f;border-radius:4px"></div>
<div style="position:absolute;left:1191px;top:296px;width:30px;height:17px;background:linear-gradient(#f6f3e6,#ebe6d2);border-left:1px solid #d2c9a6;border-radius:0 3px 3px 0"></div>
<div style="position:absolute;left:1206px;top:297px;width:1px;height:15px;background:#d2c9a6"></div>
<svg style="position:absolute;left:1194px;top:307px" width="11" height="2"><rect x="0" y="0" width="2" height="2" fill="#a8a8a0"/><rect x="4" y="0" width="2" height="2" fill="#a8a8a0"/><rect x="8" y="0" width="2" height="2" fill="#a8a8a0"/></svg>
<svg style="position:absolute;left:1210px;top:300px" width="9" height="9"><path d="M1 1L8 8M8 1L1 8" stroke="#a8a8a0" stroke-width="1.4"/></svg>
<div style="position:absolute;left:1222px;top:295px;width:1px;height:332px;background:repeating-linear-gradient(180deg,#1a1a40 0 1px,transparent 1px 2px)"></div>
<div style="position:absolute;left:588px;top:626px;width:635px;height:1px;background:repeating-linear-gradient(90deg,#1a1a40 0 1px,transparent 1px 2px)"></div>
<div style="position:absolute;left:586px;top:316px;width:1px;height:5px;background:repeating-linear-gradient(180deg,#1a1a40 0 1px,transparent 1px 2px)"></div>
<div style="position:absolute;left:586px;top:340px;width:636px;height:286px;border:1px solid #bbb187;background:#fff8e1"></div>
<svg style="position:absolute;left:587px;top:341px" width="634" height="284" shape-rendering="crispEdges"><defs><pattern id="dotsB" x="0" y="0" width="8" height="8" patternUnits="userSpaceOnUse"><rect x="4" y="0" width="1" height="1" fill="#111"/><rect x="0" y="4" width="1" height="1" fill="#111"/></pattern></defs><rect width="634" height="284" fill="url(#dotsB)"/></svg>
<div style="position:absolute;left:586px;top:319px;width:636px;height:21px;background:#fff8e1"></div>
<div style="position:absolute;left:671px;top:322px;width:90px;height:19px;background:#ebe5cf;border:1px solid #c9c09c;border-bottom:none;border-radius:6px 6px 0 0"></div>
<div style="position:absolute;left:681px;top:325.44px;line-height:14px;font-size:12px;font-weight:normal;color:#3b3000;white-space:nowrap;transform:scaleX(0.9167);transform-origin:0 0;">Изображения</div>
<div style="position:absolute;left:767px;top:322px;width:74px;height:19px;background:#ebe5cf;border:1px solid #c9c09c;border-bottom:none;border-radius:6px 6px 0 0"></div>
<div style="position:absolute;left:777px;top:325.44px;line-height:14px;font-size:12px;font-weight:normal;color:#3b3000;white-space:nowrap;transform:scaleX(0.9167);transform-origin:0 0;">Окантовка</div>
<div style="position:absolute;left:848px;top:322px;width:63px;height:19px;background:#ebe5cf;border:1px solid #c9c09c;border-bottom:none;border-radius:6px 6px 0 0"></div>
<div style="position:absolute;left:859px;top:325.44px;line-height:14px;font-size:12px;font-weight:normal;color:#3b3000;white-space:nowrap;transform:scaleX(0.9167);transform-origin:0 0;">Домены</div>
<div style="position:absolute;left:586px;top:322px;width:79px;height:19px;background:#fff8e1;border:1px solid #bbb187;border-bottom:none;box-shadow:inset 0 1px 0 #f7d699;border-radius:6px 6px 0 0"></div>
<div style="position:absolute;left:596.5px;top:325.44px;line-height:14px;font-size:12px;font-weight:normal;color:#3b3000;white-space:nowrap;transform:scaleX(0.9167);transform-origin:0 0;">Параметры</div>
<div style="position:absolute;left:593px;top:347px;width:623px;height:1px;background:repeating-linear-gradient(90deg,#1a1a40 0 1px,transparent 1px 2px)"></div>
<div style="position:absolute;left:593px;top:347px;width:1px;height:273px;background:repeating-linear-gradient(180deg,#1a1a40 0 1px,transparent 1px 2px)"></div>
<div style="position:absolute;left:593px;top:619px;width:623px;height:1px;background:repeating-linear-gradient(90deg,#1a1a40 0 1px,transparent 1px 2px)"></div>
<div style="position:absolute;left:1215px;top:347px;width:1px;height:273px;background:repeating-linear-gradient(180deg,#1a1a40 0 1px,transparent 1px 2px)"></div>
<div style="position:absolute;left:593px;top:349px;width:94px;height:19px;background:#fdf5dc;border:1px solid #f0e7c9;border-radius:2px"></div>
<div style="position:absolute;left:594px;top:351.84px;line-height:14px;font-size:12px;font-weight:normal;color:#3b3000;white-space:nowrap;transform:scaleX(0.9167);transform-origin:0 0;">Домен:</div>
<div style="position:absolute;left:691px;top:349px;width:200px;height:19px;background:#fff;border:1px solid #c3b98f;border-radius:4px"></div>
<div style="position:absolute;left:860px;top:350px;width:30px;height:17px;background:linear-gradient(#f8f5e9,#e9e3cc);border-left:1px solid #cfc6a0;border-radius:0 3px 3px 0"></div>
<div style="position:absolute;left:875px;top:351px;width:1px;height:15px;background:#d8cfab"></div>
<svg style="position:absolute;left:863px;top:362px" width="11" height="2"><rect x="0" y="0" width="2" height="2" fill="#5a4300"/><rect x="4" y="0" width="2" height="2" fill="#5a4300"/><rect x="8" y="0" width="2" height="2" fill="#5a4300"/></svg>
<svg style="position:absolute;left:879px;top:355px" width="9" height="8"><path d="M1 0.8L8 7.2M8 0.8L1 7.2" stroke="#5a4300" stroke-width="1.7"/></svg>
<div style="position:absolute;left:593px;top:371px;width:94px;height:19px;background:#fdf5dc;border:1px solid #f0e7c9;border-radius:2px"></div>
<div style="position:absolute;left:594px;top:373.84px;line-height:14px;font-size:12px;font-weight:normal;color:#3b3000;white-space:nowrap;transform:scaleX(0.9167);transform-origin:0 0;">Устройство:</div>
<div style="position:absolute;left:691px;top:371px;width:200px;height:19px;background:#fff;border:1px solid #c3b98f;border-radius:4px"></div>
<div style="position:absolute;left:860px;top:372px;width:30px;height:17px;background:linear-gradient(#f8f5e9,#e9e3cc);border-left:1px solid #cfc6a0;border-radius:0 3px 3px 0"></div>
<div style="position:absolute;left:875px;top:373px;width:1px;height:15px;background:#d8cfab"></div>
<svg style="position:absolute;left:863px;top:384px" width="11" height="2"><rect x="0" y="0" width="2" height="2" fill="#5a4300"/><rect x="4" y="0" width="2" height="2" fill="#5a4300"/><rect x="8" y="0" width="2" height="2" fill="#5a4300"/></svg>
<svg style="position:absolute;left:879px;top:377px" width="9" height="8"><path d="M1 0.8L8 7.2M8 0.8L1 7.2" stroke="#5a4300" stroke-width="1.7"/></svg>
<div style="position:absolute;left:593px;top:393px;width:94px;height:19px;background:#fdf5dc;border:1px solid #f0e7c9;border-radius:2px"></div>
<div style="position:absolute;left:594px;top:395.84px;line-height:14px;font-size:12px;font-weight:normal;color:#3b3000;white-space:nowrap;transform:scaleX(0.9167);transform-origin:0 0;">Производитель:</div>
<div style="position:absolute;left:691px;top:393px;width:200px;height:19px;background:#fff;border:1px solid #c3b98f;border-radius:4px"></div>
<div style="position:absolute;left:860px;top:394px;width:30px;height:17px;background:linear-gradient(#f8f5e9,#e9e3cc);border-left:1px solid #cfc6a0;border-radius:0 3px 3px 0"></div>
<div style="position:absolute;left:875px;top:395px;width:1px;height:15px;background:#d8cfab"></div>
<svg style="position:absolute;left:863px;top:406px" width="11" height="2"><rect x="0" y="0" width="2" height="2" fill="#5a4300"/><rect x="4" y="0" width="2" height="2" fill="#5a4300"/><rect x="8" y="0" width="2" height="2" fill="#5a4300"/></svg>
<svg style="position:absolute;left:879px;top:399px" width="9" height="8"><path d="M1 0.8L8 7.2M8 0.8L1 7.2" stroke="#5a4300" stroke-width="1.7"/></svg>
<div style="position:absolute;left:593px;top:415px;width:94px;height:19px;background:#fdf5dc;border:1px solid #f0e7c9;border-radius:2px"></div>
<div style="position:absolute;left:594px;top:417.84px;line-height:14px;font-size:12px;font-weight:normal;color:#3b3000;white-space:nowrap;transform:scaleX(0.9167);transform-origin:0 0;">Серия:</div>
<div style="position:absolute;left:691px;top:415px;width:200px;height:19px;background:#fff;border:1px solid #c3b98f;border-radius:4px"></div>
<div style="position:absolute;left:860px;top:416px;width:30px;height:17px;background:linear-gradient(#f8f5e9,#e9e3cc);border-left:1px solid #cfc6a0;border-radius:0 3px 3px 0"></div>
<div style="position:absolute;left:875px;top:417px;width:1px;height:15px;background:#d8cfab"></div>
<svg style="position:absolute;left:863px;top:428px" width="11" height="2"><rect x="0" y="0" width="2" height="2" fill="#5a4300"/><rect x="4" y="0" width="2" height="2" fill="#5a4300"/><rect x="8" y="0" width="2" height="2" fill="#5a4300"/></svg>
<svg style="position:absolute;left:879px;top:421px" width="9" height="8"><path d="M1 0.8L8 7.2M8 0.8L1 7.2" stroke="#5a4300" stroke-width="1.7"/></svg>
<div style="position:absolute;left:593px;top:437px;width:94px;height:19px;background:#fdf5dc;border:1px solid #f0e7c9;border-radius:2px"></div>
<div style="position:absolute;left:594px;top:439.84px;line-height:14px;font-size:12px;font-weight:normal;color:#3b3000;white-space:nowrap;transform:scaleX(0.9167);transform-origin:0 0;">Материал:</div>
<div style="position:absolute;left:691px;top:437px;width:200px;height:19px;background:#fff;border:1px solid #c3b98f;border-radius:4px"></div>
<div style="position:absolute;left:860px;top:438px;width:30px;height:17px;background:linear-gradient(#f8f5e9,#e9e3cc);border-left:1px solid #cfc6a0;border-radius:0 3px 3px 0"></div>
<div style="position:absolute;left:875px;top:439px;width:1px;height:15px;background:#d8cfab"></div>
<svg style="position:absolute;left:863px;top:450px" width="11" height="2"><rect x="0" y="0" width="2" height="2" fill="#5a4300"/><rect x="4" y="0" width="2" height="2" fill="#5a4300"/><rect x="8" y="0" width="2" height="2" fill="#5a4300"/></svg>
<svg style="position:absolute;left:879px;top:443px" width="9" height="8"><path d="M1 0.8L8 7.2M8 0.8L1 7.2" stroke="#5a4300" stroke-width="1.7"/></svg>
<div style="position:absolute;left:593px;top:459px;width:94px;height:19px;background:#fdf5dc;border:1px solid #f0e7c9;border-radius:2px"></div>
<div style="position:absolute;left:594px;top:461.84px;line-height:14px;font-size:12px;font-weight:normal;color:#3b3000;white-space:nowrap;transform:scaleX(0.9167);transform-origin:0 0;">Серия привязка:</div>
<div style="position:absolute;left:691px;top:459px;width:200px;height:19px;background:#fff;border:1px solid #c3b98f;border-radius:4px"></div>
<div style="position:absolute;left:860px;top:460px;width:30px;height:17px;background:linear-gradient(#f8f5e9,#e9e3cc);border-left:1px solid #cfc6a0;border-radius:0 3px 3px 0"></div>
<div style="position:absolute;left:875px;top:461px;width:1px;height:15px;background:#d8cfab"></div>
<svg style="position:absolute;left:863px;top:472px" width="11" height="2"><rect x="0" y="0" width="2" height="2" fill="#5a4300"/><rect x="4" y="0" width="2" height="2" fill="#5a4300"/><rect x="8" y="0" width="2" height="2" fill="#5a4300"/></svg>
<svg style="position:absolute;left:879px;top:465px" width="9" height="8"><path d="M1 0.8L8 7.2M8 0.8L1 7.2" stroke="#5a4300" stroke-width="1.7"/></svg>
<div style="position:absolute;left:593px;top:481px;width:94px;height:19px;background:#fdf5dc;border:1px solid #f0e7c9;border-radius:2px"></div>
<div style="position:absolute;left:594px;top:483.84px;line-height:14px;font-size:12px;font-weight:normal;color:#3b3000;white-space:nowrap;transform:scaleX(0.9167);transform-origin:0 0;">Цвет механизма:</div>
<div style="position:absolute;left:691px;top:481px;width:200px;height:19px;background:#fff;border:1px solid #c3b98f;border-radius:4px"></div>
<div style="position:absolute;left:860px;top:482px;width:30px;height:17px;background:linear-gradient(#f8f5e9,#e9e3cc);border-left:1px solid #cfc6a0;border-radius:0 3px 3px 0"></div>
<div style="position:absolute;left:875px;top:483px;width:1px;height:15px;background:#d8cfab"></div>
<svg style="position:absolute;left:863px;top:494px" width="11" height="2"><rect x="0" y="0" width="2" height="2" fill="#5a4300"/><rect x="4" y="0" width="2" height="2" fill="#5a4300"/><rect x="8" y="0" width="2" height="2" fill="#5a4300"/></svg>
<svg style="position:absolute;left:879px;top:487px" width="9" height="8"><path d="M1 0.8L8 7.2M8 0.8L1 7.2" stroke="#5a4300" stroke-width="1.7"/></svg>
<div style="position:absolute;left:593px;top:503px;width:94px;height:19px;background:#fdf5dc;border:1px solid #f0e7c9;border-radius:2px"></div>
<div style="position:absolute;left:594px;top:505.84px;line-height:14px;font-size:12px;font-weight:normal;color:#3b3000;white-space:nowrap;transform:scaleX(0.9167);transform-origin:0 0;">Цвет рамки:</div>
<div style="position:absolute;left:691px;top:503px;width:200px;height:19px;background:#fff;border:1px solid #c3b98f;border-radius:4px"></div>
<div style="position:absolute;left:860px;top:504px;width:30px;height:17px;background:linear-gradient(#f8f5e9,#e9e3cc);border-left:1px solid #cfc6a0;border-radius:0 3px 3px 0"></div>
<div style="position:absolute;left:875px;top:505px;width:1px;height:15px;background:#d8cfab"></div>
<svg style="position:absolute;left:863px;top:516px" width="11" height="2"><rect x="0" y="0" width="2" height="2" fill="#5a4300"/><rect x="4" y="0" width="2" height="2" fill="#5a4300"/><rect x="8" y="0" width="2" height="2" fill="#5a4300"/></svg>
<svg style="position:absolute;left:879px;top:509px" width="9" height="8"><path d="M1 0.8L8 7.2M8 0.8L1 7.2" stroke="#5a4300" stroke-width="1.7"/></svg>
</body></html>
